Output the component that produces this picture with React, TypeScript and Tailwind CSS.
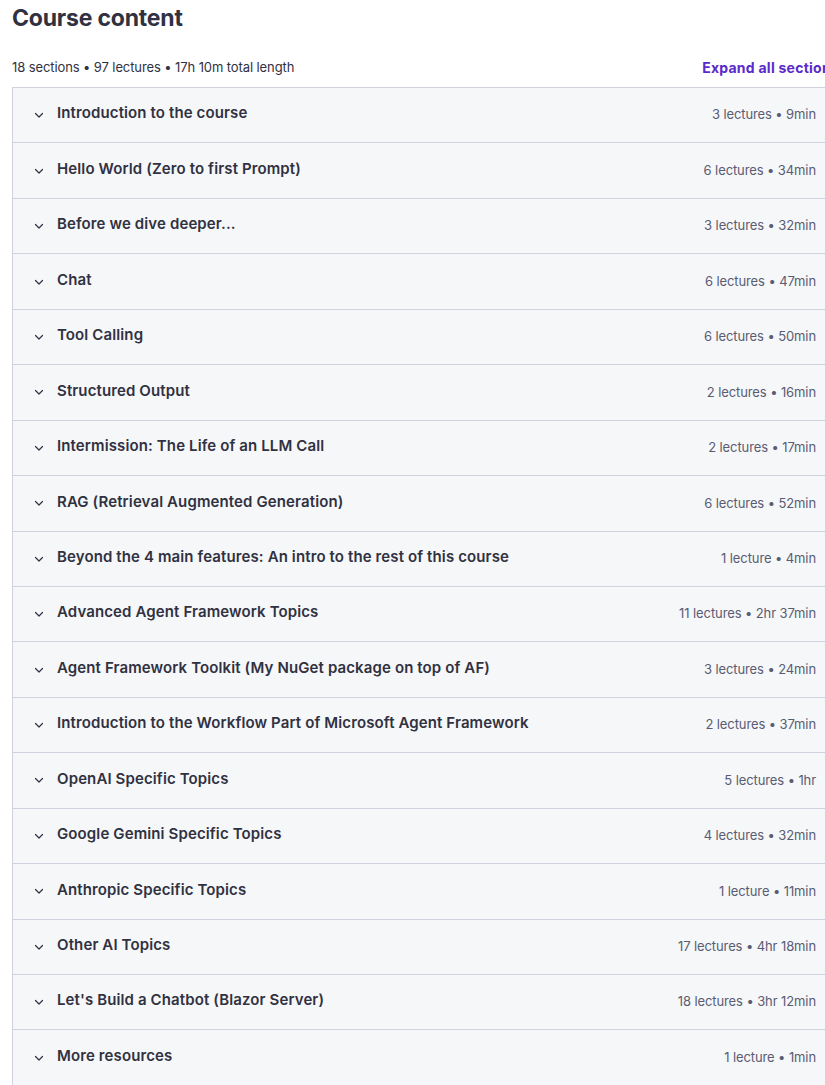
import React from "react";

const sections: [string, string][] = [
  ["Introduction to the course", "3 lectures • 9min"],
  ["Hello World (Zero to first Prompt)", "6 lectures • 34min"],
  ["Before we dive deeper...", "3 lectures • 32min"],
  ["Chat", "6 lectures • 47min"],
  ["Tool Calling", "6 lectures • 50min"],
  ["Structured Output", "2 lectures • 16min"],
  ["Intermission: The Life of an LLM Call", "2 lectures • 17min"],
  ["RAG (Retrieval Augmented Generation)", "6 lectures • 52min"],
  ["Beyond the 4 main features: An intro to the rest of this course", "1 lecture • 4min"],
  ["Advanced Agent Framework Topics", "11 lectures • 2hr 37min"],
  ["Agent Framework Toolkit (My NuGet package on top of AF)", "3 lectures • 24min"],
  ["Introduction to the Workflow Part of Microsoft Agent Framework", "2 lectures • 37min"],
  ["OpenAI Specific Topics", "5 lectures • 1hr"],
  ["Google Gemini Specific Topics", "4 lectures • 32min"],
  ["Anthropic Specific Topics", "1 lecture • 11min"],
  ["Other AI Topics", "17 lectures • 4hr 18min"],
  ["Let's Build a Chatbot (Blazor Server)", "18 lectures • 3hr 12min"],
  ["More resources", "1 lecture • 1min"],
];

function Chevron() {
  return (
    <svg width="12" height="12" viewBox="0 0 24 24" fill="none" stroke="#303141" strokeWidth="2.4" strokeLinecap="round" strokeLinejoin="round">
      <path d="M5 9l7 7 7-7" />
    </svg>
  );
}

export default function App() {
  return (
    <div className="w-[825px] h-[1085px] overflow-hidden bg-white text-[#303141]" style={{ fontFamily: "Inter, 'Noto Sans', sans-serif" }}>
      <div className="ml-[12px] w-[827px]">
        <h2 className="text-[23px] leading-[36px] font-bold tracking-[-0.2px]">Course content</h2>
        <div className="flex items-center justify-between mt-[21px] mb-[9px]">
          <span className="text-[13px] text-[#303141] tracking-[-0.1px]">18 sections • 97 lectures • 17h 10m total length</span>
          <span className="text-[14px] font-bold text-[#5b2bc9] tracking-[0.25px] whitespace-nowrap">Expand all sections</span>
        </div>
        <div className="border border-[#d1d2e0] border-b-0">
          {sections.map(([t, m]) => (
            <div key={t} className="h-[55.45px] flex items-center bg-[#f6f7f9] border-b border-[#d1d2e0] pl-[20px] pr-[22px]">
              <div className="w-[24px] flex items-center"><Chevron /></div>
              <span className="text-[15px] font-semibold flex-1 tracking-[0.12px] -mt-[3px]">{t}</span>
              <span className="text-[13px] text-[#595c73] tracking-[-0.1px]">{m}</span>
            </div>
          ))}
        </div>
      </div>
    </div>
  );
}
